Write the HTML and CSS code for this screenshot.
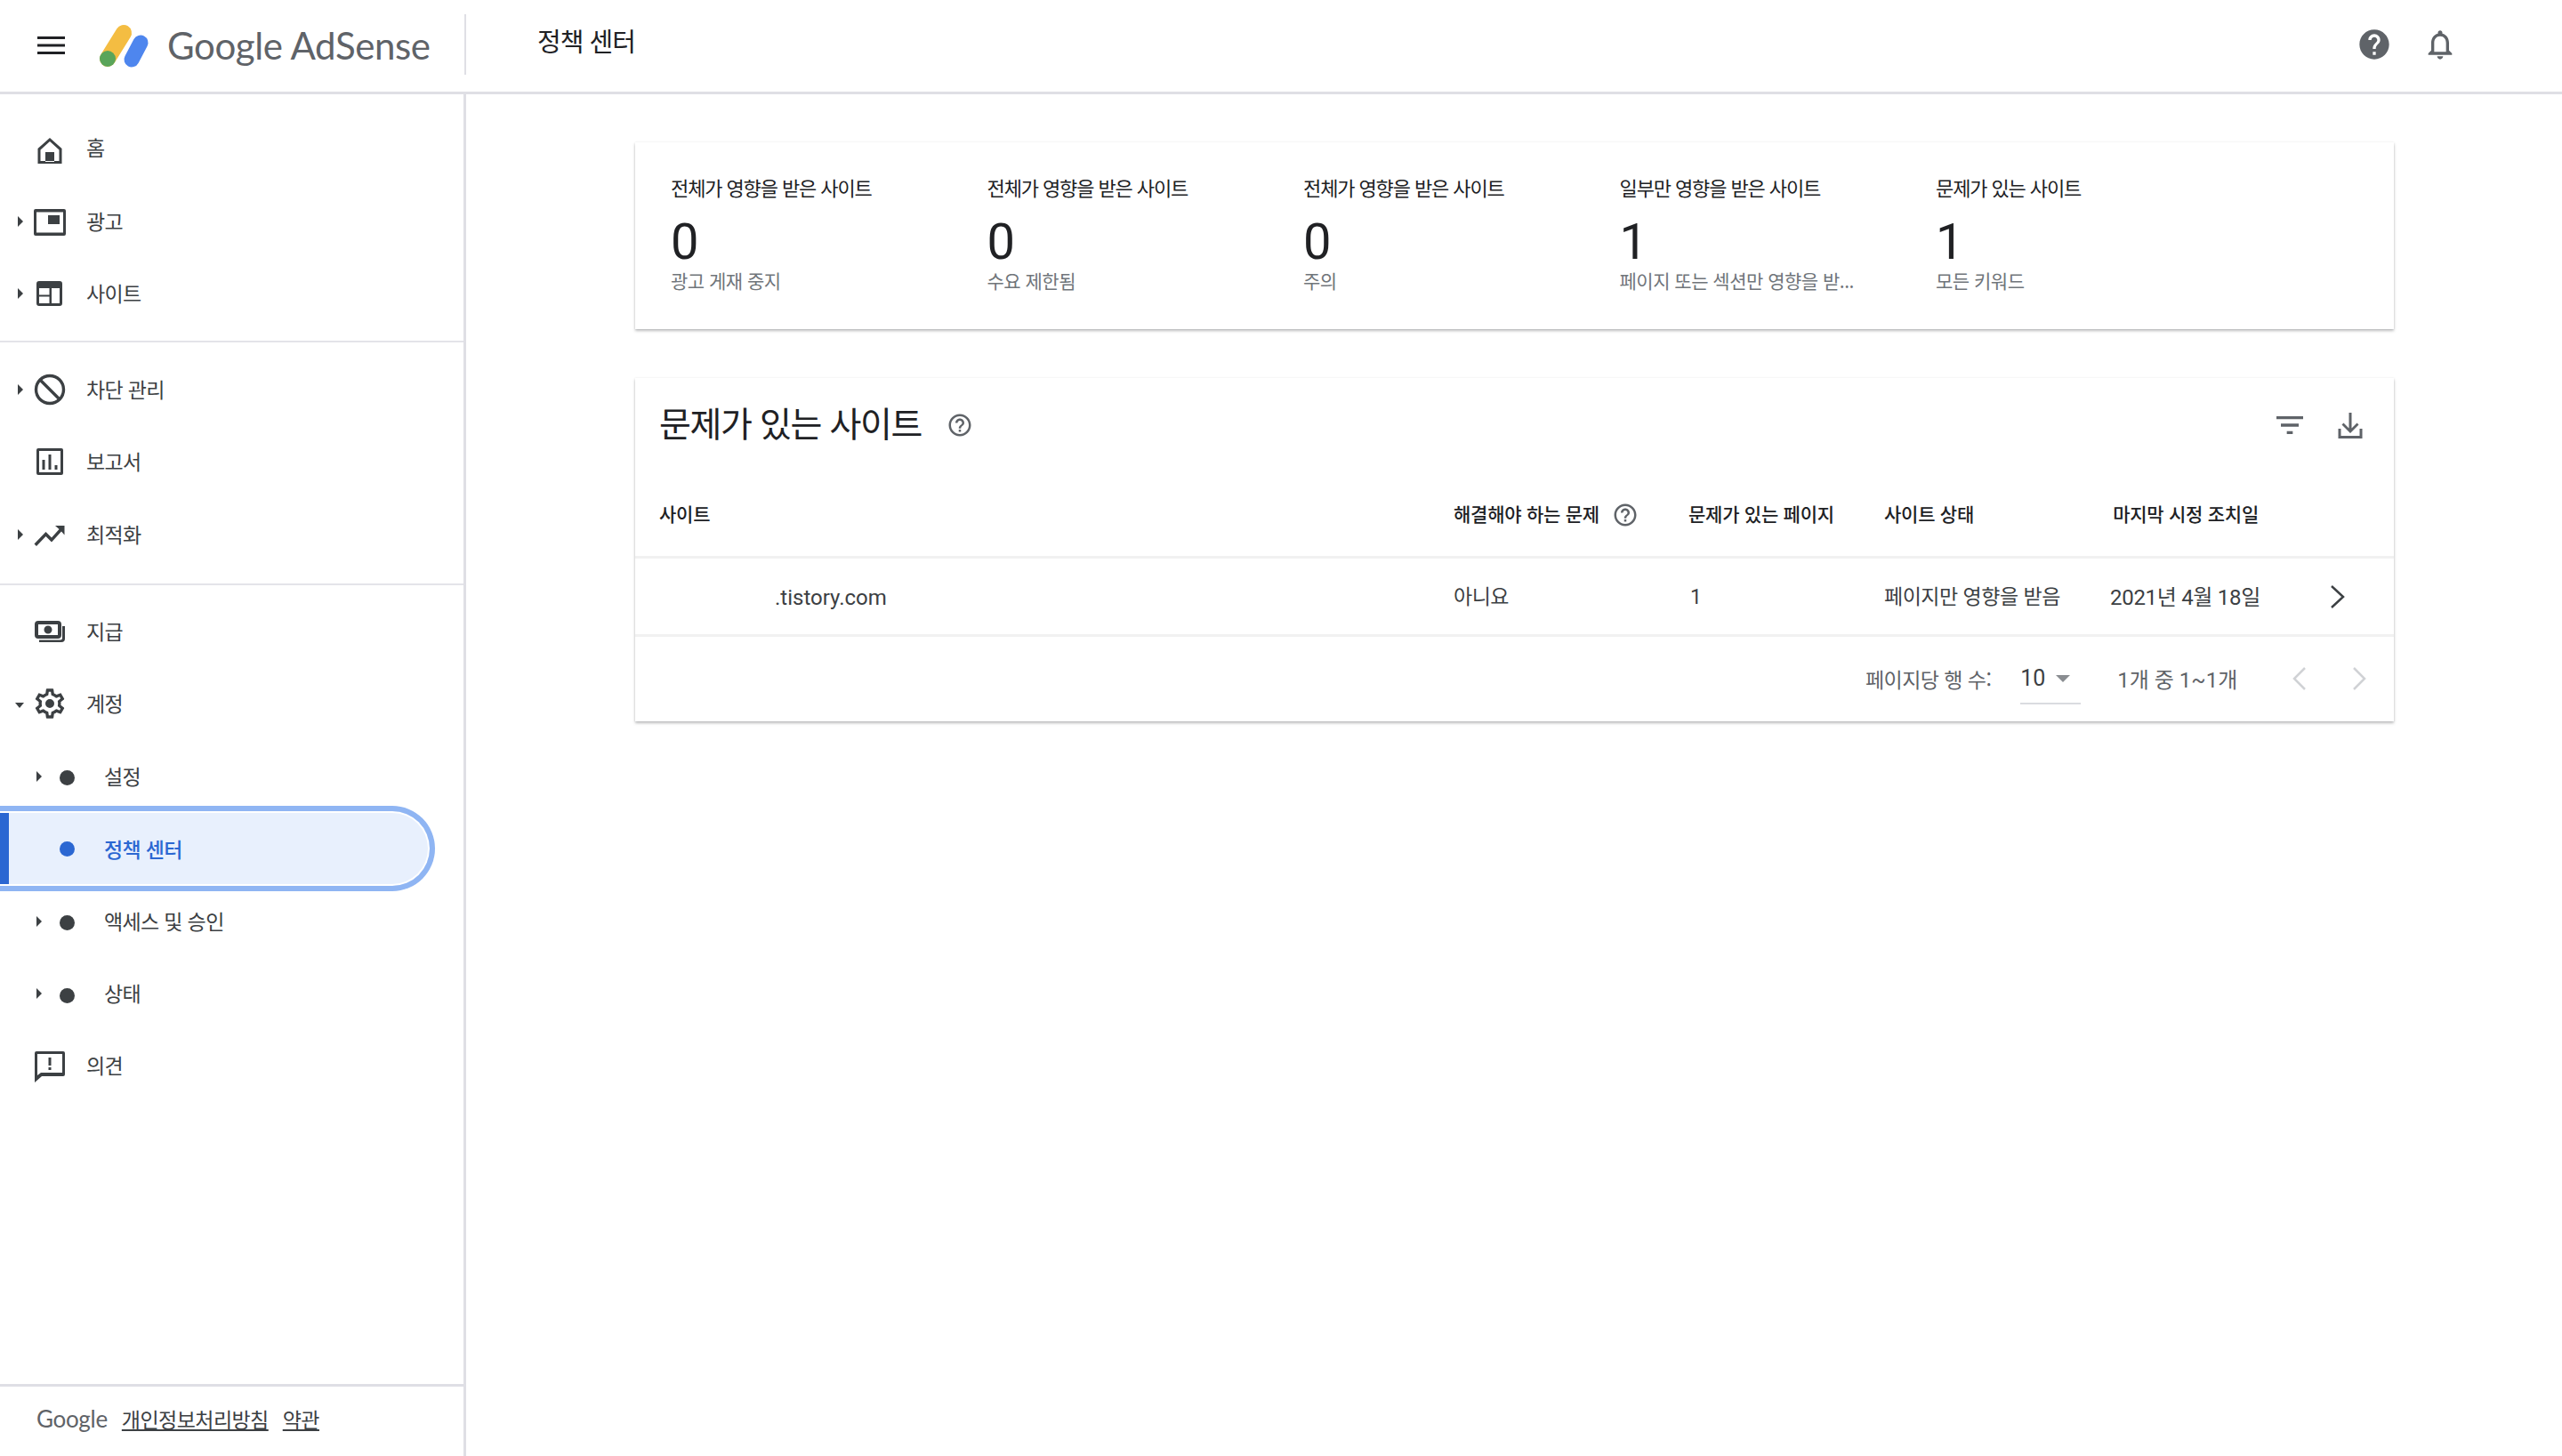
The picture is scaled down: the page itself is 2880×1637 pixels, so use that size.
FILE: index.html
```html
<!DOCTYPE html>
<html lang="ko">
<head>
<meta charset="utf-8">
<title>정책 센터 - Google AdSense</title>
<link rel="stylesheet" href="styles.css">
</head>
<body>
<header class="topbar">
  <div class="brand">
    <svg class="menu-icon" viewBox="0 0 31 20"><path d="M0 0h31v3H0zM0 8.500h31v3H0zM0 17h31v3H0z"/></svg>
    <svg class="logo-mark" viewBox="108 18 64 56">
      <path class="logo-y" d="M121 61 139 32"/>
      <path class="logo-b" d="M148 62 158 43"/>
      <circle class="logo-g" cx="121" cy="61" r="9"/>
    </svg>
    <span class="logo-text">Google AdSense</span>
  </div>
  <div class="top-sep"></div>
  <h1 class="page-title">정책 센터</h1>
  <div class="top-actions">
    <svg class="top-icon" viewBox="0 0 24 24"><path d="M12 2C6.480 2 2 6.480 2 12s4.480 10 10 10 10-4.480 10-10S17.520 2 12 2zm1 17h-2v-2h2v2zm2.070-7.750l-.9.920C13.450 12.900 13 13.500 13 15h-2v-.5c0-1.100.450-2.100 1.170-2.830l1.240-1.260c.370-.360.590-.860.590-1.410 0-1.100-.9-2-2-2s-2 .9-2 2H8c0-2.210 1.790-4 4-4s4 1.790 4 4c0 .880-.360 1.680-.930 2.250z"/></svg>
    <svg class="top-icon" viewBox="0 0 24 24"><path d="M12 22c1.100 0 2-.9 2-2h-4c0 1.100.9 2 2 2zm6-6v-5c0-3.070-1.630-5.640-4.500-6.320V4c0-.830-.670-1.500-1.500-1.500s-1.500.670-1.500 1.500v.680C7.640 5.360 6 7.920 6 11v5l-2 2v1h16v-1l-2-2zm-2 1H8v-6c0-2.480 1.510-4.500 4-4.500s4 2.020 4 4.500v6z"/></svg>
  </div>
</header>

<div class="layout">
  <aside class="sidebar">
    <nav class="nav-group first">
      <div class="nav-row home-row"><span class="caret-slot"></span>
        <svg class="nav-icon" viewBox="0 0 40 40"><path fill-rule="evenodd" d="M20 7 33.500 19v17h-27V19zM20 11 9.500 20.500V33h21V20.500zM15 23h10v11H15z"/></svg>
        <span>홈</span></div>
      <div class="nav-row"><span class="caret-slot"><i class="caret"></i></span>
        <svg class="nav-icon" viewBox="0 0 40 40"><path d="M4 6h32a2 2 0 0 1 2 2v26a2 2 0 0 1-2 2H4a2 2 0 0 1-2-2V8a2 2 0 0 1 2-2zm1 3.500v23h30v-23zM18 13h13v10H18z"/></svg>
        <span>광고</span></div>
      <div class="nav-row"><span class="caret-slot"><i class="caret"></i></span>
        <svg class="nav-icon" viewBox="0 0 40 40"><path d="M8 6h23a3 3 0 0 1 3 3v22a3 3 0 0 1-3 3H8a3 3 0 0 1-3-3V9a3 3 0 0 1 3-3zm0 8v7.500h11.500V14zm14 0v17h9V14zM8 23.500V31h11.500v-7.500z"/></svg>
        <span>사이트</span></div>
    </nav>
    <nav class="nav-group">
      <div class="nav-row"><span class="caret-slot"><i class="caret"></i></span>
        <svg class="nav-icon" viewBox="0 0 40 40"><g class="stroke"><circle cx="20" cy="20" r="15.500"/><path d="M9 9l22 22"/></g></svg>
        <span>차단 관리</span></div>
      <div class="nav-row"><span class="caret-slot"></span>
        <svg class="nav-icon" viewBox="0 0 40 40"><path d="M7 5h26a2 2 0 0 1 2 2v26a2 2 0 0 1-2 2H7a2 2 0 0 1-2-2V7a2 2 0 0 1 2-2zm1 3v24h24V8zm3.500 10h3v11h-3zm7-6h3v17h-3zm7 12h3v5h-3z"/></svg>
        <span>보고서</span></div>
      <div class="nav-row"><span class="caret-slot"><i class="caret"></i></span>
        <svg class="nav-icon" viewBox="0 0 40 40"><path d="M26 10h10.500v10.500L33 16.500 22 28.500 15.500 22 5 33l-2.500-2.500L15.500 17l6.500 6.500 8.500-9.500z"/></svg>
        <span>최적화</span></div>
    </nav>
    <nav class="nav-group last">
      <div class="nav-row"><span class="caret-slot"></span>
        <svg class="nav-icon" viewBox="0 0 40 40"><path d="M7 8h22a4 4 0 0 1 4 4v12a4 4 0 0 1-4 4H7a4 4 0 0 1-4-4V12a4 4 0 0 1 4-4zm0 4v12h22V12zm11 1.500a4.500 4.500 0 1 1 0 9 4.500 4.500 0 0 1 0-9zM34 14h3v14a4 4 0 0 1-4 4H8v-2.500h24a2 2 0 0 0 2-2z"/></svg>
        <span>지급</span></div>
      <div class="nav-row"><span class="caret-slot"><i class="caret open"></i></span>
        <svg class="nav-icon" viewBox="0 0 24 24"><path d="M19.430 12.980c.040-.320.070-.640.070-.980 0-.340-.030-.660-.070-.980l2.110-1.650c.190-.150.240-.420.120-.640l-2-3.460c-.120-.220-.370-.290-.610-.220l-2.490 1c-.520-.400-1.080-.730-1.690-.980l-.38-2.650C14.460 2.180 14.250 2 14 2h-4c-.250 0-.460.180-.490.420l-.38 2.650c-.610.250-1.170.590-1.690.980l-2.490-1c-.230-.090-.490 0-.610.220l-2 3.460c-.130.220-.070.490.120.640l2.110 1.650c-.040.320-.070.650-.070.980s.030.660.070.980l-2.110 1.650c-.190.150-.240.420-.120.640l2 3.460c.120.220.370.290.610.220l2.490-1c.520.400 1.080.730 1.690.980l.38 2.650c.030.240.240.420.490.420h4c.250 0 .460-.180.490-.420l.38-2.650c.610-.250 1.170-.590 1.690-.980l2.490 1c.230.090.490 0 .610-.220l2-3.460c.120-.220.070-.490-.120-.640l-2.110-1.650zM17.450 11.270c.040.310.050.520.050.730 0 .210-.020.430-.050.730l-.140 1.130.890.700 1.080.840-.7 1.210-1.270-.510-1.040-.420-.9.680c-.430.320-.840.560-1.250.730l-1.060.430-.160 1.130-.2 1.350h-1.400l-.190-1.350-.16-1.130-1.060-.430c-.430-.180-.830-.410-1.230-.710l-.91-.700-1.060.430-1.270.510-.7-1.210 1.080-.840.890-.7-.140-1.130c-.030-.310-.050-.540-.050-.740s.020-.430.050-.730l.140-1.130-.89-.7-1.080-.84.7-1.210 1.270.510 1.040.420.9-.68c.430-.320.840-.560 1.250-.730l1.060-.430.160-1.130.2-1.350h1.390l.19 1.350.16 1.130 1.060.430c.430.180.830.410 1.230.710l.91.700 1.060-.430 1.270-.510.7 1.210-1.070.850-.89.700.140 1.130zM12 9a3 3 0 1 0 0 6 3 3 0 0 0 0-6z"/></svg>
        <span>계정</span></div>
      <div class="nav-row sub"><span class="caret-slot"><i class="caret"></i></span><i class="dot"></i><span>설정</span></div>
      <div class="nav-row sub active"><span class="caret-slot"></span><i class="dot"></i><span>정책 센터</span></div>
      <div class="nav-row sub"><span class="caret-slot"><i class="caret"></i></span><i class="dot"></i><span>액세스 및 승인</span></div>
      <div class="nav-row sub"><span class="caret-slot"><i class="caret"></i></span><i class="dot"></i><span>상태</span></div>
      <div class="nav-row"><span class="caret-slot"></span>
        <svg class="nav-icon" viewBox="0 0 40 40"><path d="M5 4h30a2 2 0 0 1 2 2v24a2 2 0 0 1-2 2H11l-8 7V6a2 2 0 0 1 2-2zm1 3v24l4-3h24V7zm12.500 4h3v9h-3zm0 11h3v3h-3z"/></svg>
        <span>의견</span></div>
    </nav>
    <footer class="side-foot">
      <span class="foot-google">Google</span>
      <a class="foot-link">개인정보처리방침</a>
      <a class="foot-link">약관</a>
    </footer>
  </aside>

  <main class="main">
    <section class="card stats">
      <div class="stat"><div class="stat-label">전체가 영향을 받은 사이트</div><div class="stat-num">0</div><div class="stat-sub">광고 게재 중지</div></div>
      <div class="stat"><div class="stat-label">전체가 영향을 받은 사이트</div><div class="stat-num">0</div><div class="stat-sub">수요 제한됨</div></div>
      <div class="stat"><div class="stat-label">전체가 영향을 받은 사이트</div><div class="stat-num">0</div><div class="stat-sub">주의</div></div>
      <div class="stat"><div class="stat-label">일부만 영향을 받은 사이트</div><div class="stat-num">1</div><div class="stat-sub">페이지 또는 섹션만 영향을 받...</div></div>
      <div class="stat"><div class="stat-label">문제가 있는 사이트</div><div class="stat-num">1</div><div class="stat-sub">모든 키워드</div></div>
    </section>

    <section class="card table-card">
      <div class="table-title">
        <h2>문제가 있는 사이트</h2>
        <svg class="help-icon title-help" viewBox="0 0 24 24"><path d="M11 18h2v-2h-2v2zm1-16C6.480 2 2 6.480 2 12s4.480 10 10 10 10-4.480 10-10S17.520 2 12 2zm0 18c-4.410 0-8-3.590-8-8s3.590-8 8-8 8 3.590 8 8-3.590 8-8 8zm0-14c-2.210 0-4 1.790-4 4h2c0-1.100.9-2 2-2s2 .9 2 2c0 2-3 1.750-3 5h2c0-2.250 3-2.500 3-5 0-2.210-1.790-4-4-4z"/></svg>
        <div class="title-actions">
          <svg class="action-icon" viewBox="0 0 24 24"><path d="M10 18h4v-2h-4v2zM3 6v2h18V6H3zm3 7h12v-2H6v2z"/></svg>
          <svg class="action-icon" viewBox="0 0 40 40"><path d="M18.500 6h3v17.500l6-6 2 2L20 29l-9.500-9.500 2-2 6 6zM6.500 24h3v8h21v-8h3v11h-27z"/></svg>
        </div>
      </div>
      <div class="t-row t-head">
        <div>사이트</div>
        <div class="with-help">해결해야 하는 문제<svg class="help-icon" viewBox="0 0 24 24"><path d="M11 18h2v-2h-2v2zm1-16C6.480 2 2 6.480 2 12s4.480 10 10 10 10-4.480 10-10S17.520 2 12 2zm0 18c-4.410 0-8-3.590-8-8s3.590-8 8-8 8 3.590 8 8-3.590 8-8 8zm0-14c-2.210 0-4 1.790-4 4h2c0-1.100.9-2 2-2s2 .9 2 2c0 2-3 1.750-3 5h2c0-2.250 3-2.500 3-5 0-2.210-1.790-4-4-4z"/></svg></div>
        <div>문제가 있는 페이지</div>
        <div>사이트 상태</div>
        <div class="right">마지막 시정 조치일</div>
        <div></div>
      </div>
      <div class="t-row t-body">
        <div class="site-cell">.tistory.com</div>
        <div>아니요</div>
        <div class="num-cell">1</div>
        <div>페이지만 영향을 받음</div>
        <div class="right date-cell">2021년 4월 18일</div>
        <svg class="row-chev" viewBox="0 0 18 26"><path d="M2 1l13 12L2 25"/></svg>
      </div>
      <div class="pager">
        <span>페이지당 행 수:</span>
        <div class="page-size"><span>10</span><i class="size-caret"></i></div>
        <span class="page-range">1개 중 1~1개</span>
        <svg class="page-chev" viewBox="0 0 18 26"><path d="M15 1 3 13l12 12"/></svg>
        <svg class="page-chev" viewBox="0 0 18 26"><path d="M3 1l12 12L3 25"/></svg>
      </div>
    </section>
  </main>
</div>
</body>
</html>
```

FILE: styles.css
```css
* { box-sizing: border-box; }
html, body { margin: 0; height: 100%; }
body {
  width: 2880px;
  height: 1637px;
  overflow: hidden;
  background: #fff;
  color: #202124;
  font-family: "Noto Sans CJK KR", Roboto, sans-serif;
  display: flex;
  flex-direction: column;
  font-size: 22px;
}
h1, h2 { margin: 0; font-weight: 400; }

/* top bar */
.topbar {
  height: 106px;
  flex: none;
  display: flex;
  align-items: center;
  border-bottom: 3px solid #dfdfe5;
  padding-bottom: 4px;
}
.brand { width: 522px; display: flex; align-items: center; flex: none; padding-left: 42px; }
.menu-icon { width: 31px; height: 20px; fill: #202124; margin-top: 2px; }
.logo-mark { width: 64px; height: 56px; margin-left: 35px; margin-top: 2px; }
.logo-y, .logo-b { fill: none; stroke-linecap: round; }
.logo-y { stroke: #f4bd42; stroke-width: 18; }
.logo-b { stroke: #4e86ee; stroke-width: 17; }
.logo-g { fill: #5aa55a; }
.logo-text {
  font-family: Lato, Roboto, sans-serif;
  font-size: 42px;
  color: #5f6368;
  margin-left: 16px;
  letter-spacing: -.4px;
  white-space: nowrap;
  margin-top: 2px;
}
.top-sep { width: 2px; height: 68px; background: #dfdfe5; flex: none; }
.page-title { font-size: 29px; margin-left: 80px; letter-spacing: -1px; color: #202124; margin-top: -9px; }
.top-actions { margin-left: auto; display: flex; gap: 34px; padding-right: 117px; }
.top-icon { width: 40px; height: 40px; fill: #5f6368; }

/* layout */
.layout { flex: 1; display: flex; min-height: 0; }
.sidebar {
  width: 524px;
  flex: none;
  border-right: 3px solid #dfdfe5;
  display: flex;
  flex-direction: column;
  color: #3c4043;
}
.nav-group { padding: 11px 0 16px; border-bottom: 2px solid #e4e4e9; }
.nav-group.first { padding: 20px 0 13px; }
.nav-group.last { border-bottom: 0; padding-top: 10px; }
.nav-row {
  height: 81.400px;
  display: flex;
  align-items: center;
  padding-left: 16px;
  font-size: 23px;
  letter-spacing: -.65px;
  position: relative;
}
.home-row > span:last-child { margin-top: -3px; }
.caret-slot { width: 20px; flex: none; display: flex; align-items: center; justify-content: flex-start; padding-top: 2px; }
.caret {
  width: 0; height: 0;
  margin-left: 4px;
  border-left: 6px solid #3c4043;
  border-top: 6px solid transparent;
  border-bottom: 6px solid transparent;
}
.caret.open {
  margin-left: 1px;
  border-left: 5px solid transparent;
  border-right: 5px solid transparent;
  border-top: 6px solid #3c4043;
  border-bottom: 0;
  margin-top: 4px;
}
.nav-icon { width: 40px; height: 40px; fill: #3c4043; flex: none; margin-right: 21px; margin-top: 2px; }
.nav-icon .stroke { fill: none; stroke: #3c4043; stroke-width: 3.400; }
.nav-row.sub { padding-left: 37px; }
.dot { width: 17px; height: 17px; border-radius: 50%; background: #3c4043; margin: 6px 33px 0 10px; flex: none; }
.nav-row.active {
  color: #2b67d2;
  font-weight: 500;
  width: 489px;
  height: 96px;
  margin: -6.300px 0 -8.300px;
  background: #e8f0fd;
  border: 6px solid #8fb5f3;
  border-left: 0;
  border-radius: 0 48px 48px 0;
  box-shadow: inset 0 0 0 2px #fff;
  z-index: 1;
}
.nav-row.active::before {
  content: "";
  position: absolute;
  left: 0; top: 2px; bottom: 2px;
  width: 10px;
  background: #2b67d2;
}
.nav-row.active .dot { background: #2b67d2; margin-top: 0; }
.side-foot {
  margin-top: auto;
  height: 81px;
  border-top: 3px solid #dfdfe5;
  display: flex;
  align-items: center;
  padding: 0 0 6px 41px;
  font-size: 23px;
  color: #5f6368;
  letter-spacing: -.55px;
}
.foot-google { font-family: Lato, Roboto, sans-serif; font-size: 26px; letter-spacing: -.3px; margin-right: 16px; }
.foot-link { text-decoration: underline; color: #3c4043; margin-right: 16px; }

/* main */
.main { flex: 1; padding: 54px 189px 0 190px; display: flex; flex-direction: column; gap: 55px; min-width: 0; }
.card {
  width: 1977px;
  background: #fff;
  box-shadow: 0 2px 3px rgba(60,64,67,.35), 0 0 2px rgba(60,64,67,.08);
}
.stats {
  height: 210px;
  padding: 35px 0 0 40px;
  display: grid;
  grid-template-columns: repeat(5, 355.500px);
}
.stat { min-width: 0; }
.stat-label { font-size: 22px; line-height: 30px; letter-spacing: -1.100px; white-space: nowrap; font-weight: 400; }
.stat-num { font-family: Roboto, sans-serif; font-size: 56px; line-height: 56px; margin-top: 19px; color: #202124; }
.stat-sub {
  font-size: 21px;
  line-height: 28px;
  margin-top: 1px;
  color: #70757a;
  letter-spacing: -.5px;
  white-space: nowrap;
}

.table-card { height: 386px; display: flex; flex-direction: column; }
.table-title { height: 106px; padding: 0 29px 0 27px; display: flex; align-items: center; flex: none; }
.table-title h2 { font-size: 39px; letter-spacing: -1.400px; color: #202124; margin-top: -8px; }
.help-icon { width: 30px; height: 30px; fill: #5f6368; flex: none; }
.title-help { margin-left: 28px; margin-top: -1px; }
.title-actions { margin-left: auto; display: flex; gap: 28px; }
.action-icon { width: 40px; height: 40px; fill: #5f6368; }
.t-row {
  display: grid;
  grid-template-columns: 920px 264px 220px 254px 167px 1fr;
  align-items: center;
  flex: none;
}
.t-row > div:first-child { padding-left: 27px; }
.t-head { height: 97px; border-bottom: 3px solid #f1f1f1; font-size: 21px; font-weight: 500; letter-spacing: -.25px; color: #202124; padding-bottom: 3px; }
.t-head .help-icon { margin-top: 4px; }
.t-body { height: 88px; border-bottom: 3px solid #f1f1f1; font-size: 23px; letter-spacing: -.5px; color: #3c4043; padding-bottom: 3px; }
.with-help { display: flex; align-items: center; gap: 14px; white-space: nowrap; }
.right { text-align: right; white-space: nowrap; }
.t-row > div.site-cell:first-child { padding-left: 157px; font-family: Roboto, sans-serif; font-size: 24px; letter-spacing: 0; padding-top: 5px; }
.num-cell { font-family: Roboto, sans-serif; padding-left: 2px; padding-top: 5px; }
.date-cell { font-family: Roboto, "Noto Sans CJK KR", sans-serif; font-size: 24px; letter-spacing: -.3px; }
.row-chev { width: 18px; height: 26px; fill: none; stroke: #3c4043; stroke-width: 2.500; justify-self: start; margin-left: 80px; margin-top: 3px; }
.pager {
  flex: 1;
  display: flex;
  align-items: center;
  padding: 0 0 2px 1383px;
  font-size: 23px;
  letter-spacing: -.55px;
  color: #5f6368;
  white-space: nowrap;
}
.page-size {
  width: 68px;
  height: 58px;
  flex: none;
  margin-left: 33px;
  display: flex;
  align-items: center;
  gap: 12px;
  border-bottom: 2px solid #dadce0;
  font-family: Roboto, sans-serif;
  font-size: 25px;
  color: #3c4043;
  letter-spacing: 0;
  padding-top: 2px;
}
.size-caret {
  width: 0; height: 0;
  border-left: 8px solid transparent;
  border-right: 8px solid transparent;
  border-top: 8px solid #8a8d91;
}
.page-range { margin-left: 41px; width: 196px; flex: none; font-family: Roboto, "Noto Sans CJK KR", sans-serif; font-size: 24px; letter-spacing: 0; }
.page-chev { width: 18px; height: 26px; fill: none; stroke: #d0d2d5; stroke-width: 2.500; flex: none; margin-right: 49px; }
```
